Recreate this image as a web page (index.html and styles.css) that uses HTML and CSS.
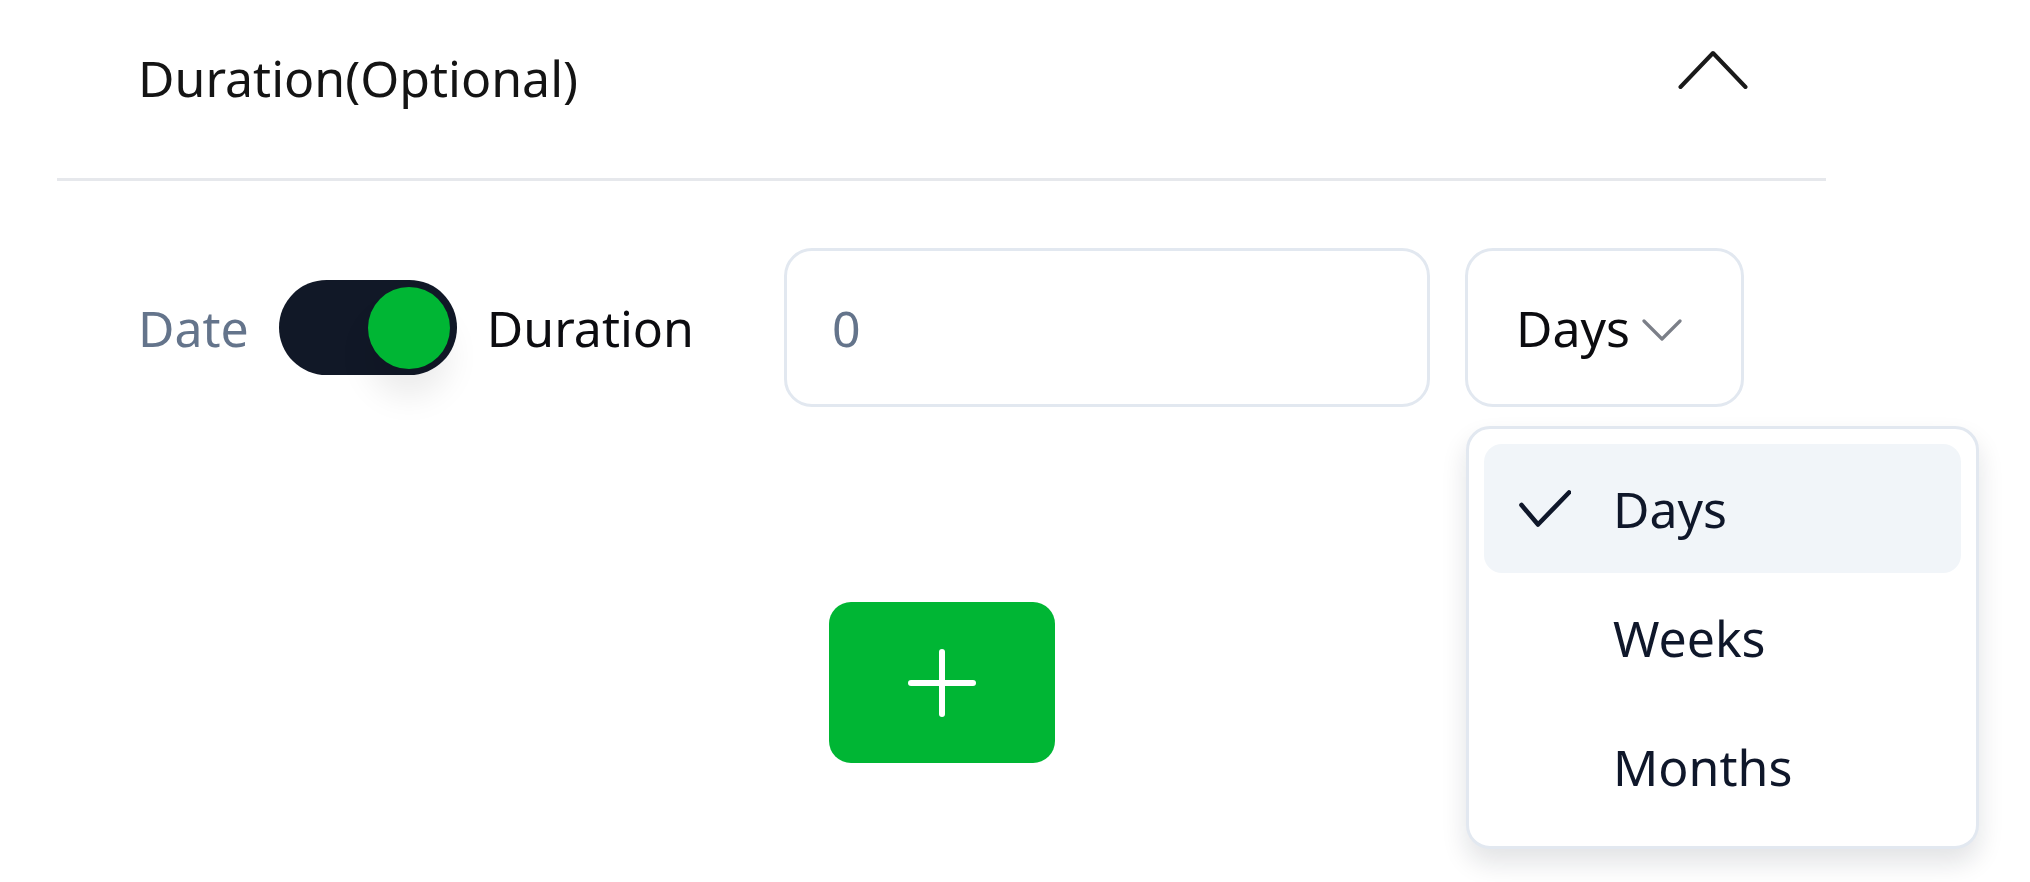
FILE: index.html
```html
<!DOCTYPE html>
<html lang="en">
<head>
<meta charset="utf-8">
<title>Duration</title>
<link rel="stylesheet" href="styles.css">
</head>
<body>
<div class="panel">
  <div class="header">
    <span class="title">Duration(Optional)</span>
    <svg class="chev-up" width="70" height="40" viewBox="0 0 70 40" aria-hidden="true">
      <polyline points="2.5,37 35,3 67.5,37" fill="none" stroke="#1a1a1a" stroke-width="4" stroke-linecap="round" stroke-linejoin="round"/>
    </svg>
  </div>

  <div class="row">
    <span class="lbl lbl-date">Date</span>
    <div class="toggle"><div class="knob"></div></div>
    <span class="lbl lbl-duration">Duration</span>
    <div class="field">0</div>
    <div class="select-wrap">
      <div class="select">
        <span>Days</span>
        <svg class="chev-down" width="40" height="24" viewBox="0 0 40 24" aria-hidden="true">
          <polyline points="2,3 20,21 38,3" fill="none" stroke="#7b7f88" stroke-width="3.2" stroke-linecap="round" stroke-linejoin="round"/>
        </svg>
      </div>
      <div class="menu">
        <div class="item item-active">
          <svg class="check" width="52" height="38" viewBox="0 0 52 38" aria-hidden="true">
            <polyline points="2.5,15 19,34.5 50,2.5" fill="none" stroke="#0f172a" stroke-width="4.6" stroke-linecap="round" stroke-linejoin="round"/>
          </svg>
          <span class="item-text">Days</span>
        </div>
        <div class="item">
          <span class="check-space"></span>
          <span class="item-text">Weeks</span>
        </div>
        <div class="item">
          <span class="check-space"></span>
          <span class="item-text">Months</span>
        </div>
      </div>
    </div>
  </div>

  <div class="actions">
    <button class="add" type="button" aria-label="Add">
      <svg width="70" height="70" viewBox="0 0 70 70" aria-hidden="true">
        <line x1="35" y1="4" x2="35" y2="66" stroke="#ffffff" stroke-width="6" stroke-linecap="round"/>
        <line x1="4" y1="35" x2="66" y2="35" stroke="#ffffff" stroke-width="6" stroke-linecap="round"/>
      </svg>
    </button>
  </div>
</div>
</body>
</html>
```

FILE: styles.css
```css
html, body {
  margin: 0;
  padding: 0;
  background: #ffffff;
}

body {
  font-family: "Noto Sans", "Open Sans", sans-serif;
  color: #111111;
  min-height: 882px;
}

.panel {
  margin-left: 57px;
  width: 1769px;
  padding-bottom: 119px;
}

.header {
  height: 178px;
  border-bottom: 3px solid #e6e8ec;
  display: flex;
  justify-content: space-between;
  align-items: flex-start;
  padding: 0 78px 0 81px;
  box-sizing: content-box;
}

.title {
  margin-top: 48px;
  font-size: 50px;
  line-height: 60px;
  color: #141414;
}

.chev-up {
  margin-top: 50px;
  display: block;
}

.row {
  margin-top: 67px;
  padding-left: 81px;
  height: 159px;
  display: flex;
  align-items: center;
}

.lbl {
  font-size: 50px;
  line-height: 60px;
}

.lbl-date {
  color: #64748b;
  margin-right: 30px;
}

.lbl-duration {
  color: #0c0c10;
  margin-left: 30px;
  margin-right: 90px;
}

.toggle {
  width: 178px;
  height: 95px;
  border-radius: 48px;
  background: #111827;
  display: flex;
  align-items: center;
  justify-content: flex-end;
  padding-right: 7px;
  box-sizing: border-box;
}

.knob {
  width: 82px;
  height: 82px;
  border-radius: 50%;
  background: #00b634;
  box-shadow: 0 28px 32px rgba(0, 0, 0, 0.08);
}

.field {
  width: 646px;
  height: 159px;
  box-sizing: border-box;
  border: 3px solid #e2e8f0;
  border-radius: 28px;
  padding-left: 45px;
  display: flex;
  align-items: center;
  font-size: 50px;
  color: #64748b;
}

.select-wrap {
  position: relative;
  margin-left: 35px;
}

.select {
  width: 279px;
  height: 159px;
  box-sizing: border-box;
  border: 3px solid #e2e8f0;
  border-radius: 28px;
  padding-left: 48px;
  display: flex;
  align-items: center;
  font-size: 50px;
  color: #0c0c10;
}

.chev-down {
  margin-left: 12px;
  margin-top: 4px;
  display: block;
}

.menu {
  position: absolute;
  top: 178px;
  left: 1px;
  width: 513px;
  box-sizing: border-box;
  border: 3px solid #e2e8f0;
  border-radius: 24px;
  padding: 15px;
  background: #ffffff;
  box-shadow: 0 14px 26px rgba(15, 23, 42, 0.12);
}

.item {
  height: 129px;
  display: flex;
  align-items: center;
  padding-left: 35px;
  border-radius: 18px;
  font-size: 50px;
  color: #0f172a;
}

.item-active {
  background: #f1f5f9;
}

.check,
.check-space {
  display: block;
  width: 52px;
  height: 38px;
  flex: none;
}

.item-text {
  margin-left: 42px;
}

.actions {
  margin-top: 195px;
  display: flex;
  justify-content: center;
}

.add {
  width: 226px;
  height: 161px;
  border: none;
  border-radius: 22px;
  background: #00b634;
  display: flex;
  align-items: center;
  justify-content: center;
  padding: 0;
  cursor: pointer;
}

.add svg {
  display: block;
}
```
